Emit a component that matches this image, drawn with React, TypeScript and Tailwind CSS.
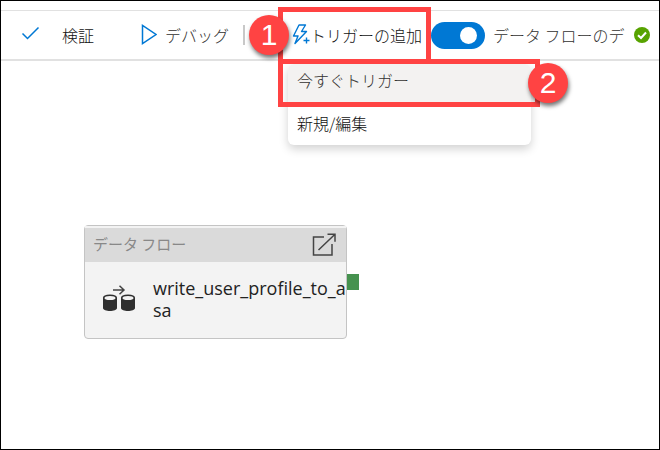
import type { ReactNode } from "react";

function Badge({ children, className }: { children: ReactNode; className: string }) {
  return (
    <span
      className={`absolute flex size-10 items-center justify-center rounded-full bg-[#ff4343] font-['Liberation_Sans',Arial,sans-serif] text-[30px] leading-none font-normal text-white shadow-[1px_3px_4px_rgba(0,0,0,0.55)] ${className}`}
    >
      {children}
    </span>
  );
}

function TriggerMenu() {
  return (
    <div className="absolute top-[53px] left-0 w-[243px] rounded-md bg-white shadow-[0_4px_10px_rgba(0,0,0,0.18)]">
      <ul className="overflow-hidden rounded-md">
        <li>
          <button type="button" className="flex h-[38px] w-full items-center bg-[#f3f2f1] px-[9px] pb-1.5 text-[#323130]">
            今すぐトリガー
          </button>
        </li>
        <li>
          <button type="button" className="flex h-[43px] w-full items-center px-[9px] pb-0.5">
            新規/編集
          </button>
        </li>
      </ul>
      <div className="pointer-events-none absolute -top-[5px] -right-[9px] -left-[10px] h-12 border-5 border-[#ff4343]" />
      <Badge className="-top-px -right-[37px]">2</Badge>
    </div>
  );
}

function Toolbar() {
  return (
    <header className="mt-[9px] flex border-t border-b-2 border-[#e1e1e1]">
      <div className="flex h-12 items-center whitespace-nowrap">
        <button type="button" className="ml-5 flex items-center gap-[22px]">
          <svg className="-mt-1" width="19" height="16" viewBox="0 0 19 16" fill="none" stroke="#0078d4" strokeWidth="1.5">
            <path d="M1.5 8.5 L6.5 13.5 L17.5 2.5" />
          </svg>
          検証
        </button>
        <button type="button" className="ml-[46px] flex items-center gap-2 text-[#323130]">
          <svg width="17" height="22" viewBox="0 0 17 22" fill="none" stroke="#0078d4" strokeWidth="1.5">
            <path d="M2.5 1.5 V19.5 L16 10.5 Z" />
          </svg>
          デバッグ
        </button>
        <span className="ml-[14px] h-5 w-0.5 bg-[#c8c8c8]" />
        <div className="relative ml-[43px] h-12 w-[143px]">
          <button type="button" className="flex h-full items-center pl-1">
            <svg width="18" height="22" viewBox="0 0 18 22" fill="none" stroke="#0078d4" strokeWidth="1.4">
              <path d="M7 1 H13.5 L9.5 7.5 H14.5 L3 19.5 L6 12 H1.5 Z" strokeLinejoin="round" />
              <path d="M14.5 13.5 V19.5 M11.5 16.5 H17.5" />
            </svg>
            トリガーの追加
          </button>
          <TriggerMenu />
          <div className="pointer-events-none absolute -top-1 -left-[10px] h-[57px] w-[153px] border-5 border-[#ff4343]" />
          <Badge className="top-1 -left-[39px]">1</Badge>
        </div>
        <label className="flex items-center gap-2 text-[#323130]">
          <input
            type="checkbox"
            role="switch"
            defaultChecked
            className="h-[27px] w-[54px] appearance-none rounded-full bg-[#0078d4] before:mt-[5px] before:ml-[29px] before:block before:size-[17px] before:rounded-full before:bg-white"
          />
          データ フローのデ
        </label>
        <svg className="ml-[9px]" width="16" height="16" viewBox="0 0 16 16">
          <circle cx="8" cy="8" r="8" fill="#57a300" />
          <path d="M4 8.2 L7 11 L12 5.5" fill="none" stroke="white" strokeWidth="2" />
        </svg>
      </div>
    </header>
  );
}

function DataFlowNode() {
  return (
    <section className="absolute top-[164px] left-[83px] w-[263px] rounded-sm border border-[#c4c4c4] bg-[#f3f3f3]">
      <header className="flex h-9 items-center justify-between border-t-2 border-[#f3f3f3] bg-[#dadada] pr-[9px] pl-2 text-[15px] font-normal text-[#888888]">
        <h2 className="pb-0.5">データ フロー</h2>
        <button type="button" aria-label="開く">
          <svg width="26" height="24" viewBox="0 0 26 24" fill="none" stroke="#444444" strokeWidth="1.5">
            <path d="M13 4 H2.5 V22 H21 V11 M7.5 17 L24 1.2 M16.5 1.2 H24 V8.7" />
          </svg>
        </button>
      </header>
      <div className="flex h-[76px] items-center gap-4 pb-0.5 pl-[17px]">
        <svg className="shrink-0" width="35" height="28" viewBox="0 0 35 28">
          <path d="M11 5 H22 M17.5 0.7 L22 5 L17.5 9.3" fill="none" stroke="#444444" strokeWidth="1.5" />
          <path d="M1 13 V23 C1 27 15 27 15 23 V13 Z M19 13 V23 C19 27 33 27 33 23 V13 Z" fill="#2f2f2f" />
          <ellipse cx="8" cy="13" rx="6.3" ry="2.8" fill="#f3f3f3" stroke="#2f2f2f" strokeWidth="1.6" />
          <ellipse cx="26" cy="13" rx="6.3" ry="2.8" fill="#f3f3f3" stroke="#2f2f2f" strokeWidth="1.6" />
        </svg>
        <p className="min-w-0 font-['Open_Sans','Noto_Sans',sans-serif] text-lg leading-[22px] font-normal break-all text-[#222222]">
          write_user_profile_to_asa
        </p>
      </div>
      <span className="absolute top-12 -right-[13px] h-4 w-3 bg-[#46924f]" />
    </section>
  );
}

export default function App() {
  return (
    <div className="flex min-h-screen flex-col overflow-hidden border border-black bg-white font-['Noto_Sans_CJK_JP',sans-serif] text-base leading-6 font-light text-[#111111]">
      <Toolbar />
      <main className="relative flex-1">
        <DataFlowNode />
      </main>
    </div>
  );
}
